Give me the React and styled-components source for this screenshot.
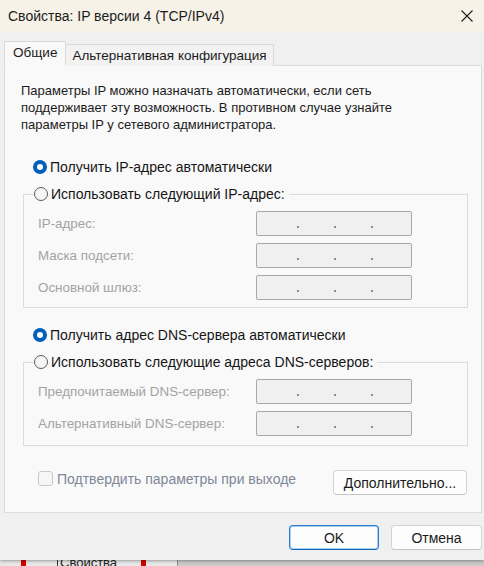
import React from 'react'
import styled, { createGlobalStyle } from 'styled-components'

const GlobalStyle = createGlobalStyle`
  html, body {
    margin: 0;
    padding: 0;
    background: #d9d9d9;
  }
  * {
    box-sizing: border-box;
  }
`

const Screen = styled.div`
  width: 484px;
  height: 566px;
  overflow: hidden;
  display: flex;
  flex-direction: column;
  font-family: 'Liberation Sans', Arial, sans-serif;
  font-size: 13px;
  color: #1b1b1b;
`

const Window = styled.div`
  height: 560px;
  flex: none;
  display: flex;
  flex-direction: column;
  background: #f0f0f0;
  box-shadow: 0 1px 3px rgba(0, 0, 0, 0.35);
  position: relative;
  z-index: 1;
`

const TitleBar = styled.div`
  height: 32px;
  flex: none;
  display: flex;
  align-items: center;
  justify-content: space-between;
  padding: 0 5px 0 8px;
  background: #f6f2e7;
  font-size: 14px;
  color: #1c1c1c;
`

const CloseButton = styled.div`
  width: 24px;
  height: 24px;
  display: flex;
  align-items: center;
  justify-content: center;
`

const Body = styled.div`
  flex: 1;
  display: flex;
  flex-direction: column;
  padding: 9px 2px 0 4px;
`

const TabStrip = styled.div`
  display: flex;
  align-items: flex-end;
  height: 25px;
  position: relative;
  z-index: 2;
  font-size: 13.5px;
`

const Tab = styled.div`
  height: ${p => (p.$active ? '25px' : '22px')};
  padding: ${p => (p.$active ? '0 8px 2px 8px' : '0 6px')};
  display: flex;
  align-items: center;
  background: ${p => (p.$active ? '#f9f9f9' : '#f2f2f2')};
  border: 1px solid #d9d9d9;
  border-bottom: ${p => (p.$active ? '1px solid #f9f9f9' : 'none')};
  border-left: ${p => (p.$active ? '1px solid #d9d9d9' : 'none')};
  color: #1b1b1b;
`

const Panel = styled.div`
  height: 448px;
  margin-top: -1px;
  background: #f9f9f9;
  border: 1px solid #dcdcdc;
  padding: 16px 0 0 16px;
  display: flex;
  flex-direction: column;
`

const Intro = styled.p`
  margin: 0;
  line-height: 17px;
  width: 420px;
`

const Choice = styled.label`
  display: flex;
  align-items: center;
  gap: 3px;
  height: 18px;
  margin-left: ${p => (p.$inLegend ? 0 : 12)}px;
  font-size: 14px;
  color: #151515;
  white-space: nowrap;
`

const RadioDot = styled.span`
  width: 14px;
  height: 14px;
  flex: none;
  border-radius: 50%;
  background: ${p => (p.$checked ? '#005fb8' : '#f5f5f5')};
  border: ${p => (p.$checked ? 'none' : '1px solid #5d5d5d')};
  display: flex;
  align-items: center;
  justify-content: center;
  &::after {
    content: '';
    display: ${p => (p.$checked ? 'block' : 'none')};
    width: 6px;
    height: 6px;
    border-radius: 50%;
    background: #fff;
  }
`

const Group = styled.fieldset`
  margin: 0;
  margin-left: 2px;
  width: 445px;
  border: 1px solid #dcdcdc;
  padding: 0 0 0 14px;
  min-width: 0;
  display: flex;
  flex-direction: column;
  gap: 7px;
  height: ${p => p.$height}px;
`

const Legend = styled.legend`
  padding: 0 4px 0 0;
  margin-left: -4px;
  background: #f9f9f9;
  margin-bottom: 8px;
`

const FieldRow = styled.div`
  display: flex;
  align-items: center;
  justify-content: space-between;
  width: 374px;
  height: 25px;
  font-size: 13.4px;
  color: #a3a3a3;
`

const AddressBox = styled.div`
  width: 156px;
  height: 25px;
  border: 1px solid #a8a8a8;
  border-radius: 2px;
  background: #f0f0f0;
  display: flex;
  justify-content: center;
  gap: 35px;
  padding: 14px 0 0 2px;
`

const Dot = styled.span`
  width: 2px;
  height: 2px;
  background: #8a8a9a;
`

const Footer = styled.div`
  display: flex;
  align-items: center;
  justify-content: space-between;
  width: 446px;
  margin-top: 24px;
`

const CheckRow = styled.label`
  display: flex;
  align-items: center;
  gap: 4px;
  margin-left: 17px;
  margin-top: -8px;
  font-size: 14px;
  color: #80869a;
`

const CheckBox = styled.span`
  width: 15px;
  height: 15px;
  border: 1px solid #c8c8c8;
  border-radius: 3px;
  background: #f6f6f6;
`

const Button = styled.button`
  font-family: inherit;
  font-size: 14px;
  color: #1b1b1b;
  height: 25px;
  width: ${p => p.$width}px;
  background: #fdfdfd;
  border: 1px solid ${p => (p.$primary ? '#2a7fd4' : '#d3d3d3')};
  border-bottom-color: ${p => (p.$primary ? '#0f6cbd' : '#c4c4c4')};
  border-radius: 4px;
  padding: 0;
  box-shadow: ${p => (p.$primary ? 'inset 0 0 0 1px #a9cdf0' : 'none')};
`

const Actions = styled.div`
  display: flex;
  justify-content: flex-end;
  gap: 12px;
  padding: 12px 0 0 0;
`

const Backdrop = styled.div`
  flex: 1;
  display: flex;
  background: #e8e8e8;
  font-size: 13px;
`

const BackLeft = styled.div`
  width: 178px;
  display: flex;
  align-items: flex-start;
  padding-left: 21px;
  border-right: 1px solid #8f8f8f;
`

const RedMark = styled.span`
  width: 5px;
  height: 6px;
  background: #d40000;
  margin-right: ${p => p.$gap}px;
`

const BackLabel = styled.span`
  line-height: 6px;
  height: 6px;
  overflow: hidden;
  margin-right: 24px;
  color: #222;
  border-left: 1px solid #333;
  padding-left: 2px;
`

const BackRight = styled.div`
  flex: 1;
  background: #c9c9c9;
`

const Spacer = styled.div`
  height: ${p => p.$h}px;
  flex: none;
`

function AddressField({ label }) {
  return (
    <FieldRow>
      <span>{label}</span>
      <AddressBox>
        <Dot />
        <Dot />
        <Dot />
      </AddressBox>
    </FieldRow>
  )
}

function Radio({ checked, inLegend, children }) {
  return (
    <Choice $inLegend={inLegend}>
      <RadioDot $checked={checked} />
      {children}
    </Choice>
  )
}

export default function App() {
  return (
    <>
      <GlobalStyle />
      <Screen>
        <Window>
          <TitleBar>
            <span>Свойства: IP версии 4 (TCP/IPv4)</span>
            <CloseButton>
              <svg width="12" height="12" viewBox="0 0 12 12">
                <path d="M0.5 0.5 L11.5 11.5 M11.5 0.5 L0.5 11.5" stroke="#1c1c1c" strokeWidth="1.1" />
              </svg>
            </CloseButton>
          </TitleBar>
          <Body>
            <TabStrip>
              <Tab $active>Общие</Tab>
              <Tab>Альтернативная конфигурация</Tab>
            </TabStrip>
            <Panel>
              <Intro>
                Параметры IP можно назначать автоматически, если сеть
                поддерживает эту возможность. В противном случае узнайте
                параметры IP у сетевого администратора.
              </Intro>
              <Spacer $h={25} />
              <Radio checked>Получить IP-адрес автоматически</Radio>
              <Spacer $h={9} />
              <Group $height={123}>
                <Legend>
                  <Radio inLegend>Использовать следующий IP-адрес:</Radio>
                </Legend>
                <AddressField label="IP-адрес:" />
                <AddressField label="Маска подсети:" />
                <AddressField label="Основной шлюз:" />
              </Group>
              <Spacer $h={18} />
              <Radio checked>Получить адрес DNS-сервера автоматически</Radio>
              <Spacer $h={9} />
              <Group $height={93}>
                <Legend>
                  <Radio inLegend>Использовать следующие адреса DNS-серверов:</Radio>
                </Legend>
                <AddressField label="Предпочитаемый DNS-сервер:" />
                <AddressField label="Альтернативный DNS-сервер:" />
              </Group>
              <Footer>
                <CheckRow>
                  <CheckBox />
                  Подтвердить параметры при выходе
                </CheckRow>
                <Button $width={134}>Дополнительно...</Button>
              </Footer>
            </Panel>
            <Actions>
              <Button $primary $width={90}>OK</Button>
              <Button $width={91}>Отмена</Button>
            </Actions>
          </Body>
        </Window>
        <Backdrop>
          <BackLeft>
            <RedMark $gap={31} />
            <BackLabel>Свойства</BackLabel>
            <RedMark $gap={0} />
          </BackLeft>
          <BackRight />
        </Backdrop>
      </Screen>
    </>
  )
}
